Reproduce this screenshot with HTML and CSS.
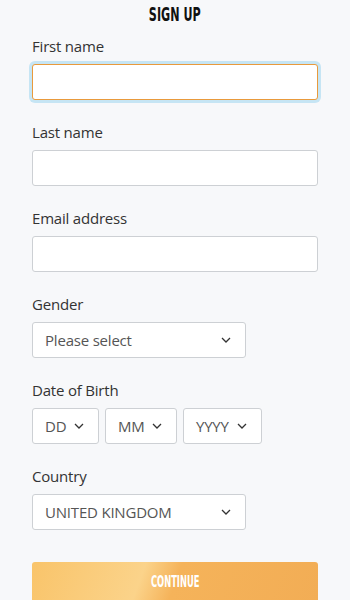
FILE: index.html
```html
<!DOCTYPE html>
<html lang="en">
<head>
<meta charset="utf-8">
<title>Sign up</title>
<link rel="stylesheet" href="styles.css">
</head>
<body>
<main class="page">
  <h1 class="title"><span class="cond">SIGN UP</span></h1>
  <form class="form">
    <div class="field">
      <label class="label">First name</label>
      <div class="input input-focus"></div>
    </div>
    <div class="field">
      <label class="label">Last name</label>
      <div class="input"></div>
    </div>
    <div class="field">
      <label class="label">Email address</label>
      <div class="input"></div>
    </div>
    <div class="field">
      <label class="label">Gender</label>
      <div class="select select-wide"><span>Please select</span><svg class="chev" viewBox="0 0 10 6" width="10" height="6"><path d="M1 1l4 4 4-4" fill="none" stroke="#333" stroke-width="1.3"/></svg></div>
    </div>
    <div class="field">
      <label class="label">Date of Birth</label>
      <div class="dob">
        <div class="select select-dd"><span>DD</span><svg class="chev" viewBox="0 0 10 6" width="10" height="6"><path d="M1 1l4 4 4-4" fill="none" stroke="#333" stroke-width="1.3"/></svg></div>
        <div class="select select-mm"><span>MM</span><svg class="chev" viewBox="0 0 10 6" width="10" height="6"><path d="M1 1l4 4 4-4" fill="none" stroke="#333" stroke-width="1.3"/></svg></div>
        <div class="select select-yy"><span>YYYY</span><svg class="chev" viewBox="0 0 10 6" width="10" height="6"><path d="M1 1l4 4 4-4" fill="none" stroke="#333" stroke-width="1.3"/></svg></div>
      </div>
    </div>
    <div class="field">
      <label class="label">Country</label>
      <div class="select select-wide"><span>UNITED KINGDOM</span><svg class="chev" viewBox="0 0 10 6" width="10" height="6"><path d="M1 1l4 4 4-4" fill="none" stroke="#333" stroke-width="1.3"/></svg></div>
    </div>
    <div class="button"><span class="cond">CONTINUE</span></div>
  </form>
</main>
</body>
</html>
```
FILE: styles.css
```css
html, body {
  margin: 0;
  padding: 0;
  background: #f7f8fa;
}
body {
  font-family: "Open Sans", "Noto Sans", sans-serif;
  color: #333;
}
.page {
  padding: 0 32px;
}
.cond {
  display: inline-block;
  transform: scaleX(0.62);
  transform-origin: center;
}
.title {
  margin: 0;
  height: 28px;
  line-height: 28px;
  text-align: center;
  font-family: "DejaVu Sans Condensed", "DejaVu Sans", sans-serif;
  font-weight: 700;
  font-size: 20px;
  color: #111;
}
.form {
  display: flex;
  flex-direction: column;
  padding-top: 8px;
}
.field {
  display: flex;
  flex-direction: column;
  gap: 8px;
  margin-bottom: 22px;
}
.label {
  font-size: 15px;
  line-height: 20px;
  color: #333;
  letter-spacing: -0.2px;
}
.input, .select {
  box-sizing: border-box;
  height: 36px;
  background: #fff;
  border: 1px solid #cdd0d4;
  border-radius: 3px;
}
.input-focus {
  border-color: #e99a3c;
  box-shadow: 0 0 0 3px #c6e5f4;
}
.select {
  display: flex;
  align-items: center;
  justify-content: space-between;
  padding: 0 14px 0 12px;
  font-size: 15px;
  letter-spacing: -0.2px;
  color: #555;
}
.select-wide { width: 214px; }
.dob {
  display: flex;
  gap: 6px;
}
.select-dd { width: 67px; }
.select-mm { width: 72px; }
.select-yy { width: 79px; }
.chev { flex: none; }
.button {
  margin-top: 10px;
  height: 42px;
  border-radius: 3px;
  background: linear-gradient(110deg, #f9c46a 0%, #fbd38a 38%, #f5b35a 50%, #f2ad55 100%);
  color: #fff;
  text-align: center;
  line-height: 40px;
  font-family: "DejaVu Sans Condensed", "DejaVu Sans", sans-serif;
  font-weight: 700;
  font-size: 15px;
}
```
